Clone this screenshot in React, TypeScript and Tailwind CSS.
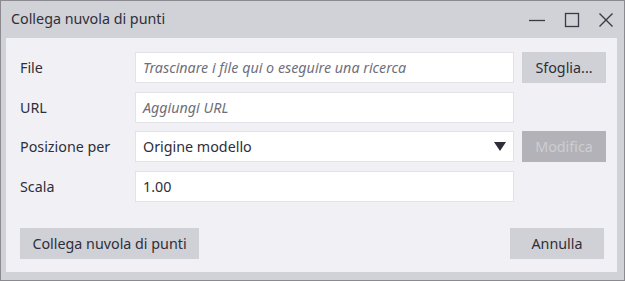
import React from "react";

const font = { fontFamily: '"Noto Sans", "Open Sans", sans-serif' };

export default function App() {
  return (
    <div
      className="w-[625px] h-[281px] border border-[#8a8a90] bg-[#d1d2d7] flex flex-col text-[14.3px] text-[#2e2e3a]"
      style={font}
    >
      {/* Title bar */}
      <div className="h-[37px] flex items-center pl-[10px] pr-[10px] shrink-0">
        <span className="flex-1 leading-none">Collega nuvola di punti</span>
        <div className="flex items-center gap-[18px] text-[#3a3a46]">
          <svg width="18" height="16" viewBox="0 0 18 16">
            <line x1="1" y1="8.5" x2="17" y2="8.5" stroke="currentColor" strokeWidth="1.3" />
          </svg>
          <svg width="16" height="16" viewBox="0 0 16 16">
            <rect x="1.5" y="1.5" width="13" height="13" fill="none" stroke="currentColor" strokeWidth="1.3" />
          </svg>
          <svg width="16" height="16" viewBox="0 0 16 16">
            <path d="M1.5 1.5 L14.5 14.5 M14.5 1.5 L1.5 14.5" stroke="currentColor" strokeWidth="1.4" />
          </svg>
        </div>
      </div>

      {/* Panel */}
      <div className="ml-[5px] mr-[7px] mb-[8px] flex-1 bg-[#f1f1f5] pl-[14px] pr-[10px] pt-[14px] pb-[13px] flex flex-col">
        <div className="flex items-center h-[31px]">
          <div className="w-[115px]">File</div>
          <div className="w-[379px] h-full bg-white border border-[#e2e2e8] flex items-center pl-[7px] italic text-[#6f6f7b]">
            Trascinare i file qui o eseguire una ricerca
          </div>
          <div className="ml-[8px] w-[84px] h-full bg-[#d0d1d6] flex items-center justify-center">Sfoglia...</div>
        </div>

        <div className="flex items-center h-[31px] mt-[9px]">
          <div className="w-[115px]">URL</div>
          <div className="w-[379px] h-full bg-white border border-[#e2e2e8] flex items-center pl-[7px] italic text-[#6f6f7b]">
            Aggiungi URL
          </div>
        </div>

        <div className="flex items-center h-[31px] mt-[8px]">
          <div className="w-[115px]">Posizione per</div>
          <div className="w-[379px] h-full bg-white border border-[#e2e2e8] flex items-center pl-[7px] pr-[7px]">
            <span className="flex-1">Origine modello</span>
            <svg width="12" height="9" viewBox="0 0 12 9">
              <path d="M0 0 H12 L6 9 Z" fill="#2e2e3a" />
            </svg>
          </div>
          <div className="ml-[8px] w-[84px] h-full bg-[#b2b2b8] text-[#cdcdd2] flex items-center justify-center">Modifica</div>
        </div>

        <div className="flex items-center h-[31px] mt-[9px]">
          <div className="w-[115px]">Scala</div>
          <div className="w-[379px] h-full bg-white border border-[#e2e2e8] flex items-center pl-[7px]">1.00</div>
        </div>

        <div className="mt-auto flex items-center justify-between h-[31px] mr-[3px]">
          <div className="w-[179px] h-full bg-[#d0d1d6] flex items-center justify-center">Collega nuvola di punti</div>
          <div className="w-[94px] h-full bg-[#d0d1d6] flex items-center justify-center">Annulla</div>
        </div>
      </div>
    </div>
  );
}
